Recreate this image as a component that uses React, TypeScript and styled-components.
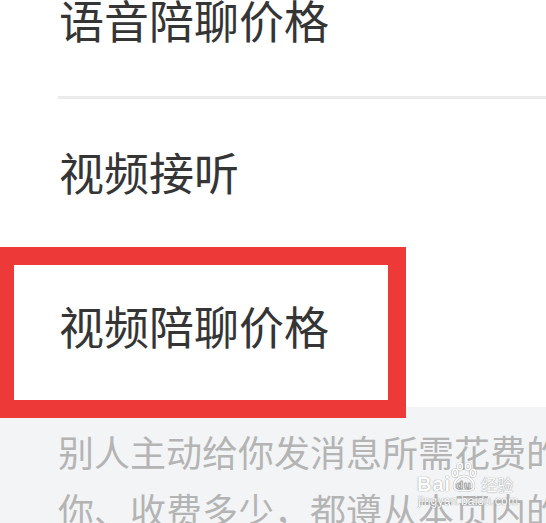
import React from "react";
import styled, { createGlobalStyle } from "styled-components";

const Global = createGlobalStyle`
  html, body { margin: 0; padding: 0; background: #ffffff; overflow: hidden; }
  body { font-family: "Noto Sans CJK SC", "Noto Sans", sans-serif; }
`;

const Page = styled.div`
  position: relative;
  width: 546px;
  height: 523px;
  overflow: hidden;
  background: #ffffff;
`;

const List = styled.div`
  display: flex;
  flex-direction: column;
  margin-top: -58px;
  background: #ffffff;
`;

const Row = styled.div<{ $h: number }>`
  height: ${(p) => p.$h}px;
  display: flex;
  align-items: center;
  padding-left: 59px;
  font-size: 45px;
  line-height: 45px;
  color: #353535;
  white-space: nowrap;
`;

const Divider = styled.div`
  height: 3px;
  margin-left: 58px;
  background: #ebebeb;
`;

const Note = styled.div`
  background: #f3f4f6;
  padding: 16px 0 0 58px;
  font-size: 36px;
  line-height: 57.5px;
  color: #b4b4b4;
  white-space: nowrap;
  height: 200px;
`;

const Highlight = styled.div`
  position: absolute;
  left: -4px;
  top: 247px;
  width: 374px;
  height: 135px;
  border: 18px solid #ee3939;
  pointer-events: none;
`;

const Watermark = styled.div`
  position: absolute;
  left: 417px;
  top: 462px;
  display: flex;
  flex-direction: column;
  align-items: flex-start;
  color: #ffffff;
  text-shadow: 0 0 1px rgba(110, 110, 110, 0.7), 0 0 1px rgba(110, 110, 110, 0.5);
  font-family: "Liberation Sans", Arial, sans-serif;
  pointer-events: none;
`;

const MarkTop = styled.div`
  display: flex;
  align-items: flex-end;
  height: 30px;
  font-size: 20px;
  font-weight: bold;
  line-height: 16px;
  letter-spacing: 1px;
`;

const MarkCn = styled.span`
  font-family: "Noto Sans CJK SC", sans-serif;
  font-size: 16px;
  font-weight: normal;
  line-height: 16px;
  letter-spacing: 0;
  margin-left: 3px;
`;

const MarkUrl = styled.div`
  font-size: 12px;
  line-height: 12px;
  margin-top: 3px;
  margin-left: 1px;
  letter-spacing: 0.2px;
`;

const pawShapes = (
  <>
    <ellipse cx="5" cy="11" rx="2.6" ry="3.4" />
    <ellipse cx="10" cy="4.5" rx="2.6" ry="3.4" />
    <ellipse cx="18" cy="4.5" rx="2.6" ry="3.4" />
    <ellipse cx="23" cy="11" rx="2.6" ry="3.4" />
    <path d="M4 25 C4 18 10 14 14 14 C18 14 24 18 24 25 C24 30 4 30 4 25 Z" />
  </>
);

const Paw = () => (
  <svg width="28" height="30" viewBox="0 0 28 30" style={{ marginLeft: -1 }}>
    <g fill="none" stroke="rgba(120,120,120,0.45)" strokeWidth="2.6">
      {pawShapes}
    </g>
    <g fill="none" stroke="#ffffff" strokeWidth="1.5">
      {pawShapes}
    </g>
    <text
      x="14"
      y="27"
      fontSize="11"
      fontWeight="bold"
      textAnchor="middle"
      fill="#ffffff"
      stroke="rgba(110,110,110,0.5)"
      strokeWidth="0.5"
      fontFamily="Liberation Sans, sans-serif"
    >
      du
    </text>
  </svg>
);

export default function App() {
  return (
    <Page>
      <Global />
      <List>
        <Row $h={154}>语音陪聊价格</Row>
        <Divider />
        <Row $h={144}>视频接听</Row>
        <Row $h={164}>视频陪聊价格</Row>
      </List>
      <Note>
        <div>别人主动给你发消息所需花费的价格，无论谁给</div>
        <div>你、收费多少，都遵从本页内的设置</div>
      </Note>
      <Highlight />
      <Watermark>
        <MarkTop>
          <span>Bai</span>
          <Paw />
          <MarkCn>经验</MarkCn>
        </MarkTop>
        <MarkUrl>jingyan.baidu.com</MarkUrl>
      </Watermark>
    </Page>
  );
}
